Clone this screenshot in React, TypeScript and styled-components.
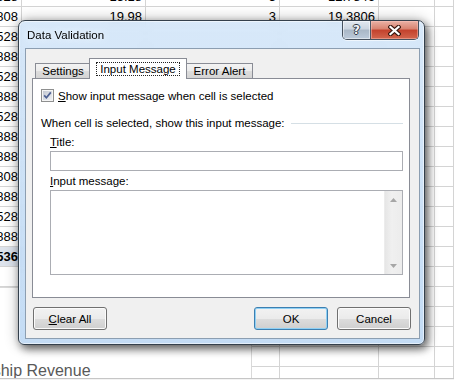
import React from "react";
import styled, { createGlobalStyle } from "styled-components";

const GlobalStyle = createGlobalStyle`
  html, body { margin: 0; padding: 0; background: #fff; }
  body {
    width: 454px;
    height: 380px;
    overflow: hidden;
    font-family: "Liberation Sans", Arial, sans-serif;
  }
`;

const cols = [22, 124, 134, 99, 56, 0];

const colA = ["528", "888", "528", "888", "528", "888", "888", "808", "888", "528", "888", "536"];

const rows: string[][] = [
  ["528", "15.18", "3", "12.7846", "", ""],
  ["808", "19.98", "3", "19.3806", "", ""],
  ...colA.map((v) => [v, "", "", "", "", ""]),
];
while (rows.length < 20) rows.push(["", "", "", "", "", ""]);

const App: React.FC = () => {
  return (
    <Page>
      <GlobalStyle />
      <Sheet>
        {rows.map((r, i) => (
          <Row key={i}>
            {r.map((v, j) => (
              <Cell key={j} $w={cols[j]} $sel={i === 13 && j === 0}>
                {v}
              </Cell>
            ))}
          </Row>
        ))}
      </Sheet>
      <Footer />

      <Chart>
        <ChartTitle>Membership Revenue</ChartTitle>
      </Chart>

      <Window>
        <TitleBar>
          <TitleText>Data Validation</TitleText>
          <CaptionGroup>
            <HelpBtn>
              <HelpGlyph>?</HelpGlyph>
            </HelpBtn>
            <CloseBtn>
              <svg width="13" height="11" viewBox="0 0 13 11">
                <path d="M2.5 2 L10.5 9 M10.5 2 L2.5 9" stroke="#3b1810" strokeWidth="4.4" strokeLinecap="square" />
                <path d="M2.5 2 L10.5 9 M10.5 2 L2.5 9" stroke="#fff" strokeWidth="2.3" strokeLinecap="square" />
              </svg>
            </CloseBtn>
          </CaptionGroup>
        </TitleBar>

        <Client>
          <TabStrip>
            <Tab $w={56}>Settings</Tab>
            <Tab $w={98} $active>
              <Focus>Input Message</Focus>
            </Tab>
            <Tab $w={67}>Error Alert</Tab>
          </TabStrip>

          <Panel>
            <CheckRow>
              <svg width="13" height="13" viewBox="0 0 13 13">
                <defs>
                  <linearGradient id="cbg" x1="0" y1="0" x2="1" y2="1">
                    <stop offset="0" stopColor="#c3c8d2" />
                    <stop offset="1" stopColor="#eef0f3" />
                  </linearGradient>
                </defs>
                <rect x="0.5" y="0.5" width="12" height="12" fill="#f5f5f5" stroke="#8e8f8f" />
                <rect x="2" y="2" width="9" height="9" fill="url(#cbg)" />
                <path d="M3.2 6.4 L5.4 8.8 L9.8 3.4" stroke="#4c5f92" strokeWidth="1.7" fill="none" />
              </svg>
              <Label>
                <u>S</u>how input message when cell is selected
              </Label>
            </CheckRow>

            <Heading>
              <Label>When cell is selected, show this input message:</Label>
              <Rule />
            </Heading>

            <Indent>
              <FieldLabel>
                <u>T</u>itle:
              </FieldLabel>
              <TextBox />
              <FieldLabel>
                <u>I</u>nput message:
              </FieldLabel>
              <TextArea>
                <Scrollbar>
                  <ScrollArrow>
                    <svg width="7" height="4" viewBox="0 0 7 4">
                      <path d="M0 4 L3.5 0 L7 4 Z" fill="#a6a6a6" />
                    </svg>
                  </ScrollArrow>
                  <ScrollTrack />
                  <ScrollArrow>
                    <svg width="7" height="4" viewBox="0 0 7 4">
                      <path d="M0 0 L3.5 4 L7 0 Z" fill="#a6a6a6" />
                    </svg>
                  </ScrollArrow>
                </Scrollbar>
              </TextArea>
            </Indent>
          </Panel>

          <ButtonRow>
            <Button>
              <u>C</u>lear All
            </Button>
            <ButtonGroup>
              <Button $default>OK</Button>
              <Button>Cancel</Button>
            </ButtonGroup>
          </ButtonRow>
        </Client>
      </Window>
    </Page>
  );
};

export default App;

const Page = styled.div`
  position: relative;
  width: 454px;
  height: 380px;
  overflow: hidden;
  background: #fff;
`;

const Sheet = styled.div`
  margin-top: -13px;
  height: 391px;
  overflow: hidden;
  display: flex;
  flex-direction: column;
`;

const Row = styled.div`
  display: flex;
  flex: none;
  height: 20px;
`;

const Cell = styled.div<{ $w: number; $sel?: boolean }>`
  box-sizing: border-box;
  width: ${({ $w }) => ($w ? `${$w}px` : "auto")};
  flex: ${({ $w }) => ($w ? "none" : "1")};
  height: 20px;
  display: flex;
  align-items: center;
  justify-content: flex-end;
  padding-right: 3px;
  border-right: 1px solid #d4d4d4;
  border-bottom: 1px solid #d4d4d4;
  overflow: hidden;
  white-space: nowrap;
  font-size: 13px;
  color: #000;
  font-weight: ${({ $sel }) => ($sel ? "bold" : "normal")};
  background: ${({ $sel }) => ($sel ? "#dde3ec" : "transparent")};
`;

const Footer = styled.div`
  height: 2px;
  border-top: 1px solid #c6c6c6;
  background: #f3f3f3;
`;

/* chart object floating on the sheet */
const Chart = styled.div`
  position: absolute;
  left: -200px;
  top: 287px;
  width: 452px;
  height: 91px;
  box-sizing: border-box;
  border: 1px solid #d9d9d9;
  border-bottom: none;
  background: #fff;
  overflow: hidden;
`;

const ChartTitle = styled.div`
  margin: 73px 0 0 133px;
  font-size: 16px;
  line-height: 20px;
  color: #595959;
  white-space: nowrap;
`;

/* dialog window over the sheet */
const Window = styled.div`
  position: absolute;
  left: 18px;
  top: 20px;
  width: 407px;
  height: 325px;
  box-sizing: border-box;
  border: 1px solid #34404c;
  border-radius: 7px 7px 6px 6px;
  background: linear-gradient(180deg, rgba(206, 227, 248, 0.8), rgba(186, 214, 243, 0.86));
  backdrop-filter: blur(4px);
  box-shadow: inset 0 0 0 1px rgba(255, 255, 255, 0.55), 3px 4px 9px rgba(0, 0, 0, 0.55),
    0 0 14px rgba(0, 0, 0, 0.3);
  display: flex;
  flex-direction: column;
  font-size: 11.5px;
  color: #000;
`;

const TitleBar = styled.div`
  height: 27px;
  flex: none;
  display: flex;
  align-items: flex-start;
  padding: 0 5px 0 8px;
`;

const TitleText = styled.div`
  flex: 1;
  line-height: 28px;
  font-size: 11.5px;
  text-shadow: 0 0 6px rgba(255, 255, 255, 0.9);
`;

const CaptionGroup = styled.div`
  display: flex;
  height: 19px;
  box-sizing: border-box;
  border: 1px solid #47525f;
  border-top: none;
  border-radius: 0 0 5px 5px;
  overflow: hidden;
  box-shadow: 0 1px 0 rgba(255, 255, 255, 0.6);
`;

const HelpBtn = styled.div`
  width: 27px;
  display: flex;
  align-items: center;
  justify-content: center;
  border-right: 1px solid #4d5866;
  background: linear-gradient(180deg, #e1e8f0 0%, #cbd5e0 45%, #a9b7c6 50%, #bccada 100%);
  box-shadow: inset 0 0 0 1px rgba(255, 255, 255, 0.5);
`;

const HelpGlyph = styled.span`
  font-family: "DejaVu Sans", sans-serif;
  font-weight: bold;
  font-size: 12px;
  line-height: 12px;
  color: #f2f4f7;
  text-shadow: 1px 0 0 #2e3946, -1px 0 0 #2e3946, 0 1px 0 #2e3946, 0 -1px 0 #2e3946;
`;

const CloseBtn = styled.div`
  width: 47px;
  display: flex;
  align-items: center;
  justify-content: center;
  background: linear-gradient(180deg, #eab2a6 0%, #d8826f 45%, #c3412c 50%, #d2664e 100%);
  box-shadow: inset 0 0 0 1px rgba(255, 200, 190, 0.45);
`;

const Client = styled.div`
  flex: 1;
  margin: 0 4px 5px 6px;
  border: 1px solid #8c9eb1;
  background: #f0f0f0;
  padding: 9px 8px 8px 6px;
  display: flex;
  flex-direction: column;
`;

const TabStrip = styled.div`
  display: flex;
  align-items: flex-end;
  height: 20px;
  padding-left: 3px;
  position: relative;
  z-index: 1;
`;

const Tab = styled.div<{ $w: number; $active?: boolean }>`
  box-sizing: border-box;
  width: ${({ $w }) => $w}px;
  height: ${({ $active }) => ($active ? 21 : 15)}px;
  margin-left: ${({ $active }) => ($active ? -2 : 0)}px;
  margin-right: ${({ $active }) => ($active ? -1 : 0)}px;
  margin-bottom: ${({ $active }) => ($active ? -1 : 0)}px;
  border: 1px solid #898c95;
  border-bottom: none;
  display: flex;
  justify-content: center;
  align-items: ${({ $active }) => ($active ? "flex-start" : "center")};
  padding-top: ${({ $active }) => ($active ? 3 : 0)}px;
  background: ${({ $active }) =>
    $active ? "#fff" : "linear-gradient(180deg, #f3f3f3 0%, #ebebeb 50%, #dddddd 51%, #d4d4d4 100%)"};
  z-index: ${({ $active }) => ($active ? 2 : 1)};
  font-size: 11.5px;
  line-height: 13px;
  white-space: nowrap;
`;

const Focus = styled.span`
  border: 1px dotted #222;
  padding: 0 3px;
  line-height: 12px;
`;

const Panel = styled.div`
  box-sizing: border-box;
  height: 220px;
  margin-right: 1px;
  border: 1px solid #898c95;
  background: #fff;
  padding: 10px 6px 0 8px;
  display: flex;
  flex-direction: column;
`;

const CheckRow = styled.div`
  display: flex;
  align-items: center;
  gap: 4px;
  height: 13px;
`;

const Label = styled.span`
  font-size: 11.5px;
  line-height: 14px;
  white-space: nowrap;
`;

const Heading = styled.div`
  display: flex;
  align-items: center;
  margin-top: 14px;
  height: 14px;
`;

const Rule = styled.div`
  flex: 1;
  height: 1px;
  margin-left: 6px;
  background: #d5dfe5;
`;

const Indent = styled.div`
  display: flex;
  flex-direction: column;
  padding-left: 9px;
`;

const FieldLabel = styled.div`
  margin-top: 5px;
  line-height: 14px;
  & + div {
    margin-top: 2px;
  }
`;

const TextBox = styled.div`
  box-sizing: border-box;
  height: 20px;
  border: 1px solid #abadb3;
  background: #fff;
  & + div {
    margin-top: 3px;
  }
`;

const TextArea = styled.div`
  box-sizing: border-box;
  height: 85px;
  margin-top: 1px;
  border: 1px solid #abadb3;
  background: #fff;
  display: flex;
  justify-content: flex-end;
`;

const Scrollbar = styled.div`
  width: 17px;
  display: flex;
  flex-direction: column;
  background: linear-gradient(90deg, #e6e6e6, #f0f0f0 40%, #ececec);
  border-left: 1px solid #ececec;
`;

const ScrollArrow = styled.div`
  height: 17px;
  display: flex;
  align-items: center;
  justify-content: center;
`;

const ScrollTrack = styled.div`
  flex: 1;
`;

const ButtonRow = styled.div`
  display: flex;
  justify-content: space-between;
  margin-top: 9px;
  padding-left: 1px;
`;

const ButtonGroup = styled.div`
  display: flex;
  gap: 9px;
`;

const Button = styled.div<{ $default?: boolean }>`
  box-sizing: border-box;
  width: 74px;
  height: 23px;
  border: 1px solid ${({ $default }) => ($default ? "#3c7fb1" : "#707070")};
  border-radius: 3px;
  background: linear-gradient(180deg, #f2f2f2 0%, #ebebeb 50%, #dddddd 51%, #cfcfcf 100%);
  box-shadow: inset 0 0 0 1px ${({ $default }) => ($default ? "#8fd0f4" : "#fbfbfb")};
  display: flex;
  align-items: center;
  justify-content: center;
  font-size: 11.5px;
`;
